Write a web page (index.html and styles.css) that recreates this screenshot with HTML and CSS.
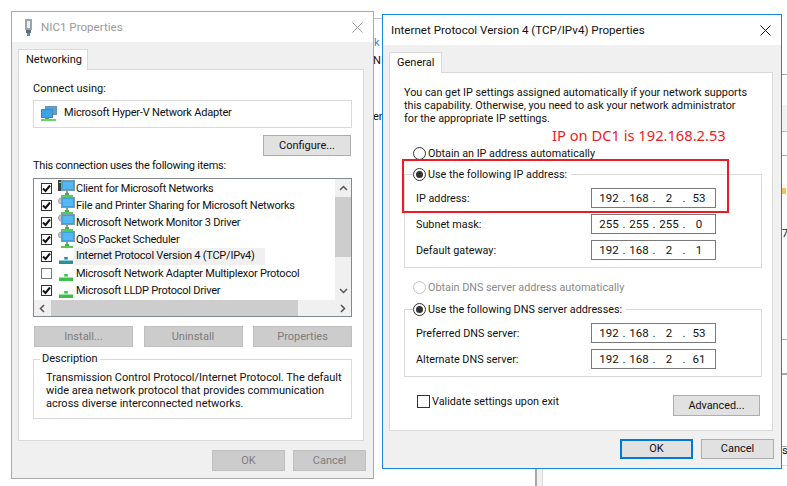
FILE: index.html
```html
<!DOCTYPE html>
<html lang="en">
<head>
<meta charset="utf-8">
<title>NIC1 Properties</title>
<link rel="stylesheet" href="styles.css">
</head>
<body>
<svg class="defs" width="0" height="0" aria-hidden="true">
  <defs>
    <symbol id="check" viewBox="0 0 11 11"><path d="M2 5.500 4.500 8 9 2.500" fill="none" stroke="#111" stroke-width="2"/></symbol>
    <symbol id="plug" viewBox="0 0 16 8"><path d="M6 0h4v3H6z"/><path d="M0 4h16v4H0z"/></symbol>
    <symbol id="monitor" viewBox="0 0 17 17">
      <rect x="3.500" y=".5" width="13" height="10" fill="#3f9fe0" stroke="#7a9cb5"/>
      <rect x="5" y="2" width="10" height="7" fill="#55b8f0"/>
      <path d="M7 13h4v2H7z" fill="#39b54a"/><path d="M3 15h12v2H3z" fill="#5ac85a"/><path d="M8 11h2v2H8z" fill="#8a9aa6"/>
    </symbol>
  </defs>
</svg>

<div class="backdrop">
  <span class="frag frag-k">k</span>
  <span class="frag frag-n">N</span>
  <span class="frag frag-en">en</span>
  <span class="frag frag-7">7</span>
  <span class="frag frag-s">s</span>
  <i class="rule rule-top"></i>
  <i class="rule rule-a"></i>
  <i class="band"></i>
  <i class="rule rule-b"></i>
  <i class="rule rule-c"></i>
  <i class="rule rule-d"></i>
  <i class="rule rule-e"></i>
  <i class="tick"></i>
  <i class="under-pane"></i>
</div>

<section class="win win-nic">
  <header class="titlebar">
    <svg class="title-icon" width="9" height="17" viewBox="0 0 9 17"><path d="M1 0h7v11H1z" fill="#9aa5ad"/><path d="M3 2h3v7H3z" fill="#e8edf0"/><path d="M2 11h5v3H2z" fill="#5c6f80"/><path d="M3 14h3v3H3z" fill="#2b9be0"/></svg>
    <span class="title-text title-muted">NIC1 Properties</span>
    <svg class="close" width="11" height="11" viewBox="0 0 11 11"><path d="M.5.5l10 10M10.500.5l-10 10" stroke="#9a9a9a" fill="none"/></svg>
  </header>
  <div class="win-body">
    <div class="tab tab-net">Networking</div>
    <div class="panel panel-net">
      <div class="line">Connect using:</div>
      <div class="adapter">
        <svg class="adapter-icon" width="16" height="17" viewBox="0 0 16 17">
          <rect x="4.500" y="1.500" width="11" height="8" fill="#4aa6e6" stroke="#6f93ad"/>
          <rect x=".5" y="4.500" width="11" height="8" fill="#3ba3e8" stroke="#58809c"/>
          <path d="M4 12.500h4v2H4z" fill="#3fae49"/><path d="M0 14h15v2H0z" fill="#6fcf6a"/>
        </svg>
        <span>Microsoft Hyper-V Network Adapter</span>
      </div>
      <button class="btn btn-config">Configure...</button>
      <div class="line line-items">This connection uses the following items:</div>
      <div class="listbox">
        <ul class="items">
          <li class="item"><span class="box"><svg width="11" height="11"><use href="#check"/></svg></span>
            <svg class="item-icon" width="17" height="17" viewBox="0 0 17 17"><rect x="0" y="0" width="5" height="11" fill="#3a3f44"/><path d="M1 2h3v1H1z" fill="#9fd36b"/><use href="#monitor"/></svg><span>Client for Microsoft Networks</span></li>
          <li class="item"><span class="box"><svg width="11" height="11"><use href="#check"/></svg></span>
            <svg class="item-icon" width="17" height="17" viewBox="0 0 17 17"><circle cx="3.500" cy="4" r="3" fill="#c4c8cc" stroke="#9aa0a5"/><use href="#monitor"/></svg><span>File and Printer Sharing for Microsoft Networks</span></li>
          <li class="item"><span class="box"><svg width="11" height="11"><use href="#check"/></svg></span>
            <svg class="item-icon" width="17" height="17" viewBox="0 0 17 17"><circle cx="3.500" cy="4" r="3" fill="#c4c8cc" stroke="#9aa0a5"/><use href="#monitor"/></svg><span>Microsoft Network Monitor 3 Driver</span></li>
          <li class="item"><span class="box"><svg width="11" height="11"><use href="#check"/></svg></span>
            <svg class="item-icon" width="17" height="17" viewBox="0 0 17 17"><circle cx="3.500" cy="4" r="3" fill="#c4c8cc" stroke="#9aa0a5"/><use href="#monitor"/></svg><span>QoS Packet Scheduler</span></li>
          <li class="item"><span class="box"><svg width="11" height="11"><use href="#check"/></svg></span>
            <svg class="proto proto-teal" width="14" height="7"><use href="#plug"/></svg><span class="picked">Internet Protocol Version 4 (TCP/IPv4)</span></li>
          <li class="item"><span class="box"></span>
            <svg class="proto" width="14" height="7"><use href="#plug"/></svg><span>Microsoft Network Adapter Multiplexor Protocol</span></li>
          <li class="item"><span class="box"><svg width="11" height="11"><use href="#check"/></svg></span>
            <svg class="proto" width="14" height="7"><use href="#plug"/></svg><span>Microsoft LLDP Protocol Driver</span></li>
        </ul>
        <div class="vscroll">
          <svg class="arrow" width="9" height="6" viewBox="0 0 9 6"><path d="M1 5l3.500-3.500L8 5" fill="none" stroke="#555" stroke-width="1.500"/></svg>
          <div class="vthumb"></div>
          <svg class="arrow arrow-end" width="9" height="6" viewBox="0 0 9 6"><path d="M1 1l3.500 3.500L8 1" fill="none" stroke="#555" stroke-width="1.500"/></svg>
        </div>
        <div class="hscroll">
          <svg class="arrow" width="6" height="9" viewBox="0 0 6 9"><path d="M5 1L1.500 4.500 5 8" fill="none" stroke="#555" stroke-width="1.500"/></svg>
          <div class="hthumb"></div>
          <svg class="arrow" width="6" height="9" viewBox="0 0 6 9"><path d="M1 1l3.500 3.500L1 8" fill="none" stroke="#555" stroke-width="1.500"/></svg>
        </div>
      </div>
      <div class="actions">
        <button class="btn btn-off btn-action">Install...</button>
        <button class="btn btn-off btn-action">Uninstall</button>
        <button class="btn btn-off btn-action">Properties</button>
      </div>
      <fieldset class="desc">
        <legend class="desc-legend">Description</legend>
        <p class="desc-text">Transmission Control Protocol/Internet Protocol. The default<br>wide area network protocol that provides communication<br>across diverse interconnected networks.</p>
      </fieldset>
    </div>
    <div class="footer">
      <button class="btn btn-off btn-foot">OK</button>
      <button class="btn btn-off btn-foot">Cancel</button>
    </div>
  </div>
</section>

<section class="win win-ip">
  <header class="titlebar">
    <span class="title-text">Internet Protocol Version 4 (TCP/IPv4) Properties</span>
    <svg class="close" width="11" height="11" viewBox="0 0 11 11"><path d="M.5.5l10 10M10.500.5l-10 10" stroke="#111" fill="none"/></svg>
  </header>
  <div class="win-body">
    <div class="tab tab-gen">General</div>
    <div class="panel panel-ip">
      <p class="intro">You can get IP settings assigned automatically if your network supports<br>this capability. Otherwise, you need to ask your network administrator<br>for the appropriate IP settings.</p>
      <div class="choice choice-ip"><span class="radio"></span><span class="opt">Obtain an IP address automatically</span></div>
      <fieldset class="group group-ip">
        <legend class="group-legend"><span class="radio radio-on"></span><span class="opt">Use the following IP address:</span></legend>
        <div class="row"><span class="row-label">IP address:</span>
          <div class="ip"><span>192</span><b>.</b><span>168</span><b>.</b><span>2</span><b>.</b><span>53</span></div></div>
        <div class="row"><span class="row-label">Subnet mask:</span>
          <div class="ip"><span>255</span><b>.</b><span>255</span><b>.</b><span>255</span><b>.</b><span>0</span></div></div>
        <div class="row"><span class="row-label">Default gateway:</span>
          <div class="ip"><span>192</span><b>.</b><span>168</span><b>.</b><span>2</span><b>.</b><span>1</span></div></div>
      </fieldset>
      <div class="choice choice-dns choice-off"><span class="radio radio-off"></span><span class="opt">Obtain DNS server address automatically</span></div>
      <fieldset class="group group-dns">
        <legend class="group-legend"><span class="radio radio-on"></span><span class="opt">Use the following DNS server addresses:</span></legend>
        <div class="row"><span class="row-label">Preferred DNS server:</span>
          <div class="ip"><span>192</span><b>.</b><span>168</span><b>.</b><span>2</span><b>.</b><span>53</span></div></div>
        <div class="row"><span class="row-label">Alternate DNS server:</span>
          <div class="ip"><span>192</span><b>.</b><span>168</span><b>.</b><span>2</span><b>.</b><span>61</span></div></div>
      </fieldset>
      <div class="validate">
        <div class="validate-check"><span class="box box-plain"></span><span class="opt">Validate settings upon exit</span></div>
        <button class="btn btn-adv">Advanced...</button>
      </div>
    </div>
    <div class="footer footer-ip">
      <button class="btn btn-foot btn-default">OK</button>
      <button class="btn btn-foot">Cancel</button>
    </div>
  </div>
</section>

<div class="callout"><span class="callout-text">IP on DC1 is 192.168.2.53</span></div>
</body>
</html>
```
FILE: styles.css
```css
* { box-sizing: border-box; }
html, body { margin: 0; padding: 0; }
body {
  position: relative;
  width: 787px;
  height: 486px;
  overflow: hidden;
  background: #fff;
  font: 11px/14px Roboto, "Noto Sans", sans-serif;
  color: #111;
}
.defs { position: absolute; }

/* desktop behind the dialogs */
.backdrop { position: absolute; inset: 0; }
.backdrop .frag { position: absolute; line-height: 14px; color: #111; }
.frag-k { left: 374px; top: 36px; color: #2f86d6 !important; }
.frag-n { left: 373px; top: 54px; }
.frag-en { left: 373px; top: 110px; }
.frag-7 { left: 782px; top: 227px; }
.frag-s { left: 782px; top: 444px; }
.rule { position: absolute; height: 1px; background: #a8a8a8; }
.rule-top { left: 373px; top: 18px; width: 10px; background: #c8c8c8; }
.rule-a { left: 781px; top: 74px; width: 6px; }
.band { position: absolute; left: 781px; top: 105px; width: 6px; height: 27px; background: #f2f2f2; border-bottom: 1px solid #bbb; }
.rule-b { left: 781px; top: 155px; width: 6px; }
.rule-c { left: 781px; top: 339px; width: 6px; }
.rule-d { left: 781px; top: 373px; width: 6px; height: 2px; }
.rule-e { left: 781px; top: 446px; width: 6px; }
.tick { position: absolute; left: 782px; top: 188px; width: 4px; height: 6px; background: #f2c15a; }
.under-pane { position: absolute; left: 535px; top: 465px; width: 260px; height: 30px; background: #f0f0f0; border-left: 2px solid #a8a8a8; }
.under-pane::after { content: ""; display: block; margin: 0 0 0 5px; height: 21px; background: #fff; border: 1px solid #d9d9d9; }

/* dialog windows sit freely on the desktop */
.win {
  position: absolute;
  display: flex;
  flex-direction: column;
  background: #f0f0f0;
  border: 1px solid #a9a9a9;
}
.win-nic { left: 11px; top: 11px; width: 363px; height: 468px; }
.win-ip { left: 382px; top: 14px; width: 400px; height: 455px; border-color: #1a86d8; }

.titlebar {
  display: flex;
  align-items: center;
  height: 30px;
  background: #fff;
  padding-left: 8px;
  flex: none;
}
.win-nic .titlebar { padding-left: 12px; }
.title-icon { margin-right: 8px; }
.title-text { font-size: 11.6px; flex: 1; }
.title-muted { color: #9a9a9a; }
.close { margin-right: 10px; }

.win-body { padding: 7px 0 0 6px; flex: 1; }
.tab {
  position: relative;
  z-index: 1;
  height: 21px;
  background: #fff;
  border: 1px solid #d9d9d9;
  border-bottom: 0;
  padding-left: 7px;
  line-height: 19px;
}
.tab-net { width: 70px; }
.tab-gen { width: 53px; }
.panel {
  display: flex;
  flex-direction: column;
  background: #fff;
  border: 1px solid #d9d9d9;
  margin-top: -1px;
}
.panel-net { width: 346px; height: 372px; padding: 12px 0 0 14px; align-items: flex-start; }
.panel-ip { width: 384px; height: 359px; padding: 13px 0 0 14px; align-items: flex-start; font-size: 10.8px; }

.line { height: 14px; white-space: nowrap; }
.adapter {
  display: flex;
  align-items: center;
  gap: 7px;
  width: 319px;
  height: 28px;
  margin-top: 4px;
  padding: 0 0 2px 7px;
  border: 1px solid #d9d9d9;
  letter-spacing: -.2px;
}
.line-items { margin-top: 3px; letter-spacing: -.24px; }

.btn {
  display: block;
  height: 21px;
  padding: 0;
  background: #e1e1e1;
  border: 1px solid #adadad;
  font: inherit;
  color: #111;
}
.btn-off { background: #cccccc; border-color: #bfbfbf; color: #7d7d7d; }
.btn-config { width: 88px; margin: 7px 0 0 230px; }
.btn-action { width: 99px; }
.btn-foot { width: 73px; }
.btn-adv { width: 87px; height: 21px; }
.btn-default { border: 2px solid #0078d7; }

.listbox {
  display: grid;
  grid-template-columns: 1fr 16px;
  grid-template-rows: 121px 16px;
  width: 319px;
  height: 139px;
  margin-top: 5px;
  border: 1px solid #828790;
  background: #fff;
}
.items { list-style: none; margin: 0; padding: 1px 0 0 7px; overflow: hidden; letter-spacing: -.23px; }
.item { display: flex; align-items: center; height: 17px; white-space: nowrap; }
.box {
  flex: none;
  display: flex;
  width: 11px;
  height: 11px;
  background: #fff;
  border: 1px solid #333;
  margin: -1px 6px 0 0;
}
.box svg { flex: none; margin: -1px; }
.box:empty { border-color: #777; }
.item-icon { flex: none; margin-right: 1px; fill: #39b54a; }
.proto { flex: none; margin: 7px 3px 0 1px; fill: #3fbf4a; width: 14px; }
.proto-teal { fill: #2a8f9c; }
.picked { background: #f0f0f0; margin-left: -2px; padding: 1px 10px 2px 2px; }

.vscroll {
  display: flex;
  flex-direction: column;
  align-items: center;
  background: #f0f0f0;
  padding-top: 6px;
}
.vthumb { width: 100%; height: 60px; background: #cdcdcd; margin-top: 6px; }
.arrow { flex: none; }
.arrow-end { margin-top: auto; margin-bottom: 6px; }
.hscroll {
  grid-column: 1 / 3;
  display: flex;
  align-items: center;
  justify-content: space-between;
  background: #f0f0f0;
  padding: 0 5px;
}
.hthumb { width: 251px; height: 100%; background: #cdcdcd; margin-right: 42px; margin-left: 6px; }

.actions { display: flex; gap: 10.5px; margin: 9px 0 0 1px; }
.desc {
  width: 319px;
  height: 67px;
  margin: 5px 0 0;
  padding: 0 0 0 12px;
  border: 1px solid #d9d9d9;
  min-width: 0;
}
.desc-legend { margin-left: -6px; padding: 0 2px; line-height: 14px; }
.desc-text { margin: 5px 0 0; line-height: 13px; white-space: nowrap; }

.footer { display: flex; justify-content: flex-end; gap: 8px; margin-top: 9px; padding-right: 7px; }
.footer-ip { margin-top: 8px; }
.footer-ip .btn { height: 20px; }

.intro { margin: 0; line-height: 13px; white-space: nowrap; }
.choice { display: flex; align-items: center; gap: 2px; height: 14px; margin-left: 9px; white-space: nowrap; }
.choice-ip { margin-top: 21px; }
.choice-dns { margin-top: 12px; }
.choice-off { color: #8a8a8a; }
.opt, .row-label { padding-top: 2px; }
.radio {
  flex: none;
  position: relative;
  width: 13px;
  height: 13px;
  border: 1px solid #333;
  border-radius: 50%;
  background: #fff;
}
.radio-off { border-color: #c4c4c4; }
.radio-on::after {
  content: "";
  position: absolute;
  inset: 2px;
  border-radius: 50%;
  background: #333;
}
.group {
  width: 358px;
  margin: 0;
  padding: 7px 0 7px 11px;
  border: 1px solid #d9d9d9;
  min-width: 0;
}
.group-ip { margin-top: 7px; }
.group-dns { margin-top: 8px; }
.group-legend { display: flex; align-items: center; gap: 2px; margin-left: -3px; padding: 0 4px 0 0; height: 14px; white-space: nowrap; }
.row { display: flex; align-items: center; }
.row + .row { margin-top: 6px; }
.row-label { width: 175px; white-space: nowrap; }
.ip {
  display: grid;
  grid-template-columns: 22px 8px 22px 8px 22px 8px 22px;
  width: 125px;
  height: 20px;
  padding-left: 6px;
  border: 1px solid #7a7a7a;
  background: #fff;
  font-size: 11.5px;
  line-height: 18px;
  text-align: center;
}
.ip b { font-weight: 400; }

.validate { display: flex; justify-content: space-between; width: 356px; margin-top: 18px; padding-left: 13px; }
.validate-check { display: flex; align-items: center; height: 14px; margin-top: -1px; white-space: nowrap; }
.box-plain { width: 13px; height: 13px; margin: 0 2px 0 0; border-color: #333 !important; }

/* annotation drawn over the dialog */
.callout {
  position: absolute;
  left: 402px;
  top: 159px;
  width: 327px;
  height: 54px;
  border: 2px solid #ed1c24;
}
.callout-text {
  position: absolute;
  left: 148px;
  top: -35px;
  font: 14.7px/18px "Noto Sans", sans-serif;
  color: #ed1c24;
  white-space: nowrap;
}
```
